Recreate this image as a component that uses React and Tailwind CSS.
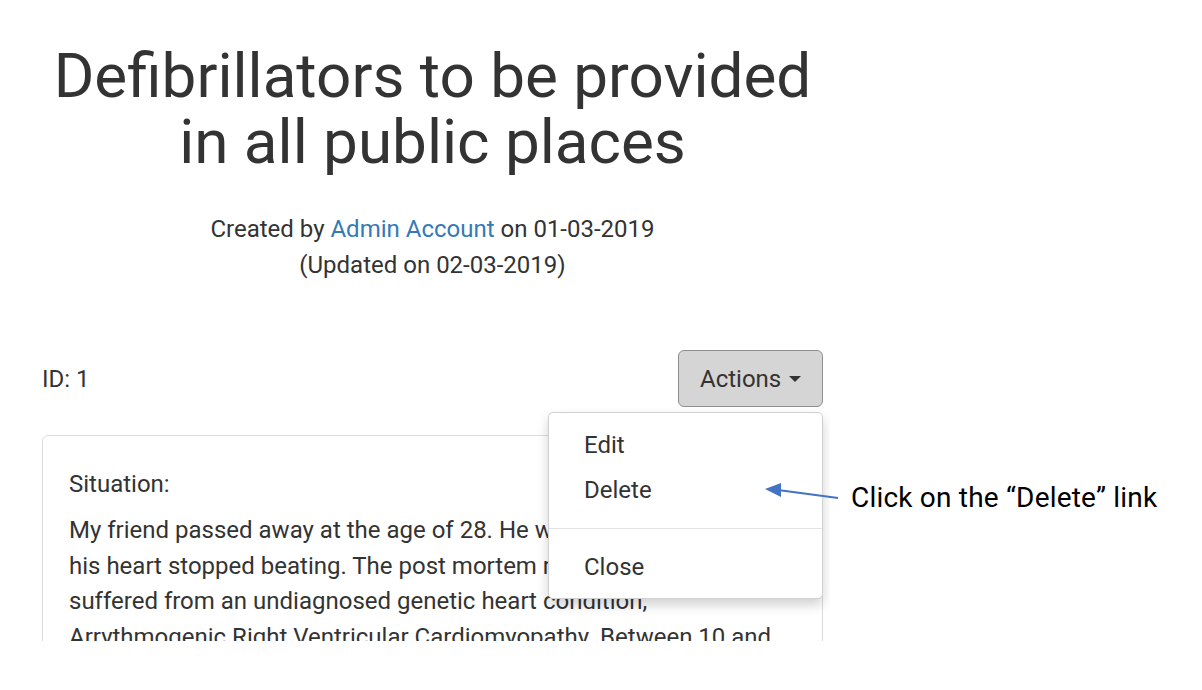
import React from "react";

function ActionsMenu() {
  return (
    <div className="relative">
      <button className="flex items-center gap-[8px] h-[57px] w-[145px] pl-[21px] rounded-[6px] border border-[#8e8e8e] bg-[#d5d5d5] text-[24px] text-[#333]">
        Actions
        <span className="w-0 h-0 border-l-[6px] border-r-[6px] border-t-[6px] border-l-transparent border-r-transparent border-t-[#333]" />
      </button>
      <div className="absolute right-0 top-[62px] w-[275px] bg-white border border-[#d0d0d0] rounded-[5px] shadow-[0_6px_12px_rgba(0,0,0,0.18)] pt-[10px] pb-[8px] z-10">
        <div className="px-[35px] h-[45px] leading-[45px] text-[24px] text-[#333]">Edit</div>
        <div className="px-[35px] h-[45px] leading-[45px] text-[24px] text-[#333]">Delete</div>
        <div className="mt-[15px] mb-[16px] border-t border-[#e2e2e2]" />
        <div className="px-[35px] h-[45px] leading-[45px] text-[24px] text-[#333]">Close</div>
      </div>
    </div>
  );
}

export default function App() {
  return (
    <div className="relative w-[1202px] h-[690px] bg-white font-['Roboto',sans-serif] text-[#333]">
      <div className="w-[830px] h-[641px] overflow-hidden">
        <div className="ml-[42px] w-[781px] pt-[43px]">
          <h1 className="-mx-[20px] text-center text-[62px] leading-[66px] font-normal whitespace-nowrap">
            Defibrillators to be provided
            <br />
            in all public places
          </h1>
          <div className="mt-[36px] text-center text-[24px] leading-[36px]">
            <div>
              Created by <a className="text-[#337ab7]">Admin Account</a> on 01-03-2019
            </div>
            <div>(Updated on 02-03-2019)</div>
          </div>
          <div className="mt-[67px] flex items-center justify-between">
            <span className="text-[24px]">ID: 1</span>
            <ActionsMenu />
          </div>
          <div className="mt-[28px] border border-[#dcdcdc] rounded-[6px] overflow-hidden pl-[26px] pr-[27px] pt-[32px] pb-[20px]">
            <div className="text-[24px] leading-[32px]">Situation:</div>
            <p className="mt-[13px] text-[24px] leading-[35.5px] whitespace-nowrap">
              My friend passed away at the age of 28. He was playing football
              <br />
              his heart stopped beating. The post mortem revealed that he
              <br />
              suffered from an undiagnosed genetic heart condition,
              <br />
              Arrythmogenic Right Ventricular Cardiomyopathy. Between 10 and
              <br />
              20 people die from this condition every year in the UK.
            </p>
          </div>
        </div>
      </div>
      <svg className="absolute left-[760px] top-[478px] z-20" width="85" height="24" viewBox="0 0 85 24">
        <line x1="78" y1="20" x2="18" y2="12" stroke="#4472c4" strokeWidth="2" />
        <polygon points="5,11 21,5 21,19" fill="#4472c4" />
      </svg>
      <div className="absolute left-[851px] top-[481px] text-[28px] leading-[34px] text-black tracking-[0.2px]">
        Click on the “Delete” link
      </div>
    </div>
  );
}
